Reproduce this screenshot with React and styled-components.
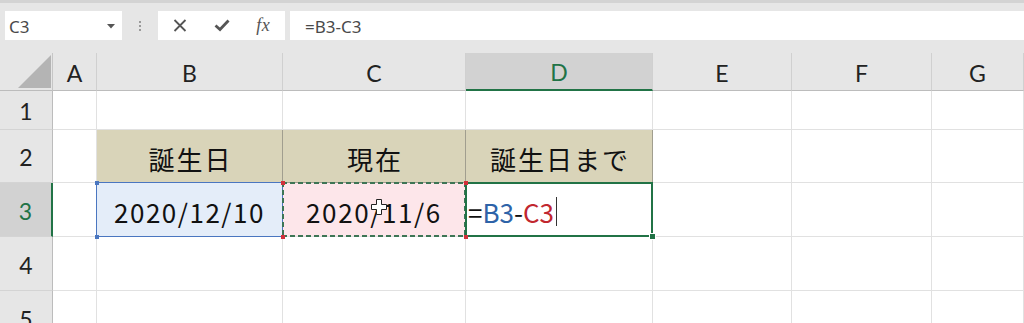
import React from "react";
import styled, { createGlobalStyle } from "styled-components";

const GlobalStyle = createGlobalStyle`
  html, body {
    margin: 0;
    padding: 0;
    background: #ffffff;
    overflow: hidden;
  }
`;

const columns = ["A", "B", "C", "D", "E", "F", "G"];

const FormulaBar = () => (
  <Bar>
    <NameBox>
      <span>C3</span>
      <svg width="8" height="5" viewBox="0 0 8 5">
        <path d="M0 0 L8 0 L4 4.5 Z" fill="#555" />
      </svg>
    </NameBox>
    <Grip>
      <i />
      <i />
      <i />
    </Grip>
    <Buttons>
      <IconSlot>
        <svg width="14" height="13" viewBox="0 0 14 13">
          <path d="M1.5 1 L12.5 12 M12.5 1 L1.5 12" stroke="#555" strokeWidth="1.8" />
        </svg>
      </IconSlot>
      <IconSlot>
        <svg width="16" height="13" viewBox="0 0 16 13">
          <path d="M1.5 6.5 L6 10.5 L14.5 1.5" stroke="#555" strokeWidth="2.8" fill="none" />
        </svg>
      </IconSlot>
      <IconSlot>
        <Fx>fx</Fx>
      </IconSlot>
    </Buttons>
    <FormulaInput>=B3-C3</FormulaInput>
  </Bar>
);

const PlusCursor = () => (
  <Pointer width="16" height="16" viewBox="0 0 16 16">
    <path
      d="M5.5 0.5 H10.5 V5.5 H15.5 V10.5 H10.5 V15.5 H5.5 V10.5 H0.5 V5.5 H5.5 Z"
      fill="#fff"
      stroke="#222"
      strokeWidth="1"
    />
  </Pointer>
);

const App = () => {
  const emptyRow = (n) => (
    <React.Fragment key={n}>
      <RowHeader>{n}</RowHeader>
      {columns.map((c) => (
        <Cell key={c} />
      ))}
    </React.Fragment>
  );

  return (
    <Page>
      <GlobalStyle />
      <FormulaBar />
      <Sheet>
        <Corner>
          <svg width="53" height="38" viewBox="0 0 53 38">
            <path d="M18 35 L51 2 L51 35 Z" fill="#b4b4b4" />
          </svg>
        </Corner>
        {columns.map((c) => (
          <ColHeader key={c} $active={c === "D"}>
            {c}
          </ColHeader>
        ))}

        {emptyRow(1)}

        <RowHeader>2</RowHeader>
        <Cell />
        <TitleCell>誕生日</TitleCell>
        <TitleCell>現在</TitleCell>
        <TitleCell>誕生日まで</TitleCell>
        <Cell />
        <Cell />
        <Cell />

        <RowHeader $active>3</RowHeader>
        <Cell />
        <RefCell $bg="#e4edf9" $line="#4a76c0">
          2020/12/10
          <Handle $side="left" $pos="top" $color="#4a76c0" />
          <Handle $side="left" $pos="bottom" $color="#4a76c0" />
        </RefCell>
        <CopyCell>
          2020/11/6
          <PlusCursor />
          <Handle $side="left" $pos="top" $color="#d2303a" />
          <Handle $side="left" $pos="bottom" $color="#d2303a" />
          <Handle $side="right" $pos="top" $color="#d2303a" />
          <Handle $side="right" $pos="bottom" $color="#d2303a" />
        </CopyCell>
        <EditCell>
          <span>=</span>
          <Ref $color="#2e63a8">B3</Ref>
          <span>-</span>
          <Ref $color="#c1272f">C3</Ref>
          <Caret />
          <FillHandle />
        </EditCell>
        <Cell />
        <Cell />
        <Cell />

        {emptyRow(4)}
        {emptyRow(5)}
      </Sheet>
    </Page>
  );
};

const Page = styled.div`
  width: 1024px;
  height: 323px;
  overflow: hidden;
  background: #fff;
`;

const Bar = styled.div`
  height: 53px;
  border-top: 3px solid #d3d3d3;
  background: #e6e6e6;
  display: flex;
  align-items: flex-start;
  padding-top: 8px;
  box-sizing: border-box;
`;

const NameBox = styled.div`
  margin-left: 5px;
  width: 117px;
  height: 29px;
  background: #fff;
  display: flex;
  align-items: center;
  justify-content: space-between;
  padding: 1px 7px 0 4px;
  box-sizing: border-box;
  font-family: "Noto Sans", "Liberation Sans", sans-serif;
  font-size: 17px;
  color: #4a4a4a;
`;

const Grip = styled.div`
  width: 36px;
  height: 29px;
  display: flex;
  flex-direction: column;
  align-items: center;
  justify-content: center;
  gap: 2px;

  i {
    display: block;
    width: 2px;
    height: 2px;
    background: #9a9a9a;
  }
`;

const Buttons = styled.div`
  width: 127px;
  height: 29px;
  background: #fff;
  display: flex;
  padding: 0 1px;
  box-sizing: border-box;
`;

const IconSlot = styled.div`
  flex: 1;
  display: flex;
  align-items: center;
  justify-content: center;
`;

const Fx = styled.span`
  font-family: "Liberation Serif", "DejaVu Serif", serif;
  font-style: italic;
  font-size: 18px;
  color: #555;
  letter-spacing: 0.5px;
`;

const FormulaInput = styled.div`
  flex: 1;
  margin-left: 5px;
  height: 29px;
  background: #fff;
  display: flex;
  align-items: center;
  padding: 1px 0 0 15px;
  box-sizing: border-box;
  font-family: "Noto Sans", "Liberation Sans", sans-serif;
  font-size: 17px;
  color: #4a4a4a;
`;

const Sheet = styled.div`
  display: grid;
  grid-template-columns: 53px 44px 186px 183px 187px 139px 140px 1fr;
  grid-template-rows: 38px 39px 53px 54px 54px 54px;
  font-family: Lato, "Open Sans", sans-serif;
`;

const Corner = styled.div`
  background: #e6e6e6;
  border-right: 1px solid #c6c6c6;
  border-bottom: 1px solid #bcbcbc;
  box-sizing: border-box;
  overflow: hidden;

  svg {
    display: block;
  }
`;

const ColHeader = styled.div`
  display: flex;
  align-items: center;
  justify-content: center;
  box-sizing: border-box;
  padding-top: 2px;
  background: ${(p) => (p.$active ? "#d2d2d2" : "#e6e6e6")};
  border-right: 1px solid #d0d0d0;
  border-bottom: ${(p) => (p.$active ? "2px solid #217346" : "1px solid #bcbcbc")};
  color: ${(p) => (p.$active ? "#217346" : "#222")};
  font-size: 23px;
`;

const RowHeader = styled.div`
  display: flex;
  align-items: center;
  justify-content: center;
  box-sizing: border-box;
  padding-top: 2px;
  background: ${(p) => (p.$active ? "#d2d2d2" : "#e6e6e6")};
  border-right: ${(p) => (p.$active ? "2px solid #217346" : "1px solid #bcbcbc")};
  border-bottom: 1px solid #d4d4d4;
  color: ${(p) => (p.$active ? "#217346" : "#222")};
  font-size: 23px;
`;

const Cell = styled.div`
  position: relative;
  box-sizing: border-box;
  border-right: 1px solid #e1e1e1;
  border-bottom: 1px solid #e1e1e1;
  display: flex;
  align-items: center;
  justify-content: center;
  font-family: "Noto Sans CJK JP", "Noto Sans", sans-serif;
  font-size: 26px;
  color: #111;
`;

const TitleCell = styled(Cell)`
  background: #d9d4b9;
  border-right-color: #a19e8f;
  border-bottom-color: #a19e8f;
  letter-spacing: 2px;
  padding: 4px 0 0 2px;
`;

const RefCell = styled(Cell)`
  background: ${(p) => p.$bg};
  padding-top: 3px;
  letter-spacing: 1.5px;

  &::after {
    content: "";
    position: absolute;
    inset: -1px;
    border: 1px solid ${(p) => p.$line};
    pointer-events: none;
  }
`;

const CopyCell = styled(Cell)`
  background: #fde6ea;
  padding-top: 3px;
  letter-spacing: 1.6px;

  &::after {
    content: "";
    position: absolute;
    inset: -1px;
    pointer-events: none;
    background:
      repeating-linear-gradient(90deg, #3d7555 0 5px, transparent 5px 8px) top / 100% 2px no-repeat,
      repeating-linear-gradient(90deg, #3d7555 0 5px, transparent 5px 8px) bottom / 100% 2px no-repeat,
      repeating-linear-gradient(180deg, #3d7555 0 5px, transparent 5px 8px) left / 2px 100% no-repeat,
      repeating-linear-gradient(180deg, #3d7555 0 5px, transparent 5px 8px) right / 2px 100% no-repeat;
  }
`;

const Handle = styled.span`
  position: absolute;
  z-index: 2;
  width: 4px;
  height: 4px;
  background: ${(p) => p.$color};
  ${(p) => (p.$side === "left" ? "left: -2px;" : "right: -3px;")}
  ${(p) => (p.$pos === "top" ? "top: -2px;" : "bottom: -3px;")}
`;

const EditCell = styled(Cell)`
  justify-content: flex-start;
  padding: 3px 0 0 2px;
  background: #fff;

  &::after {
    content: "";
    position: absolute;
    inset: -1px;
    border: 2px solid #217346;
    pointer-events: none;
  }
`;

const Ref = styled.span`
  color: ${(p) => p.$color};
`;

const Caret = styled.span`
  display: inline-block;
  width: 1px;
  height: 29px;
  margin-left: 2px;
  background: #333;
`;

const FillHandle = styled.span`
  position: absolute;
  z-index: 3;
  right: -4px;
  bottom: -4px;
  width: 5px;
  height: 5px;
  background: #217346;
  border: 1px solid #fff;
`;

const Pointer = styled.svg`
  position: absolute;
  z-index: 2;
  left: 88px;
  top: 16px;
`;

export default App;
